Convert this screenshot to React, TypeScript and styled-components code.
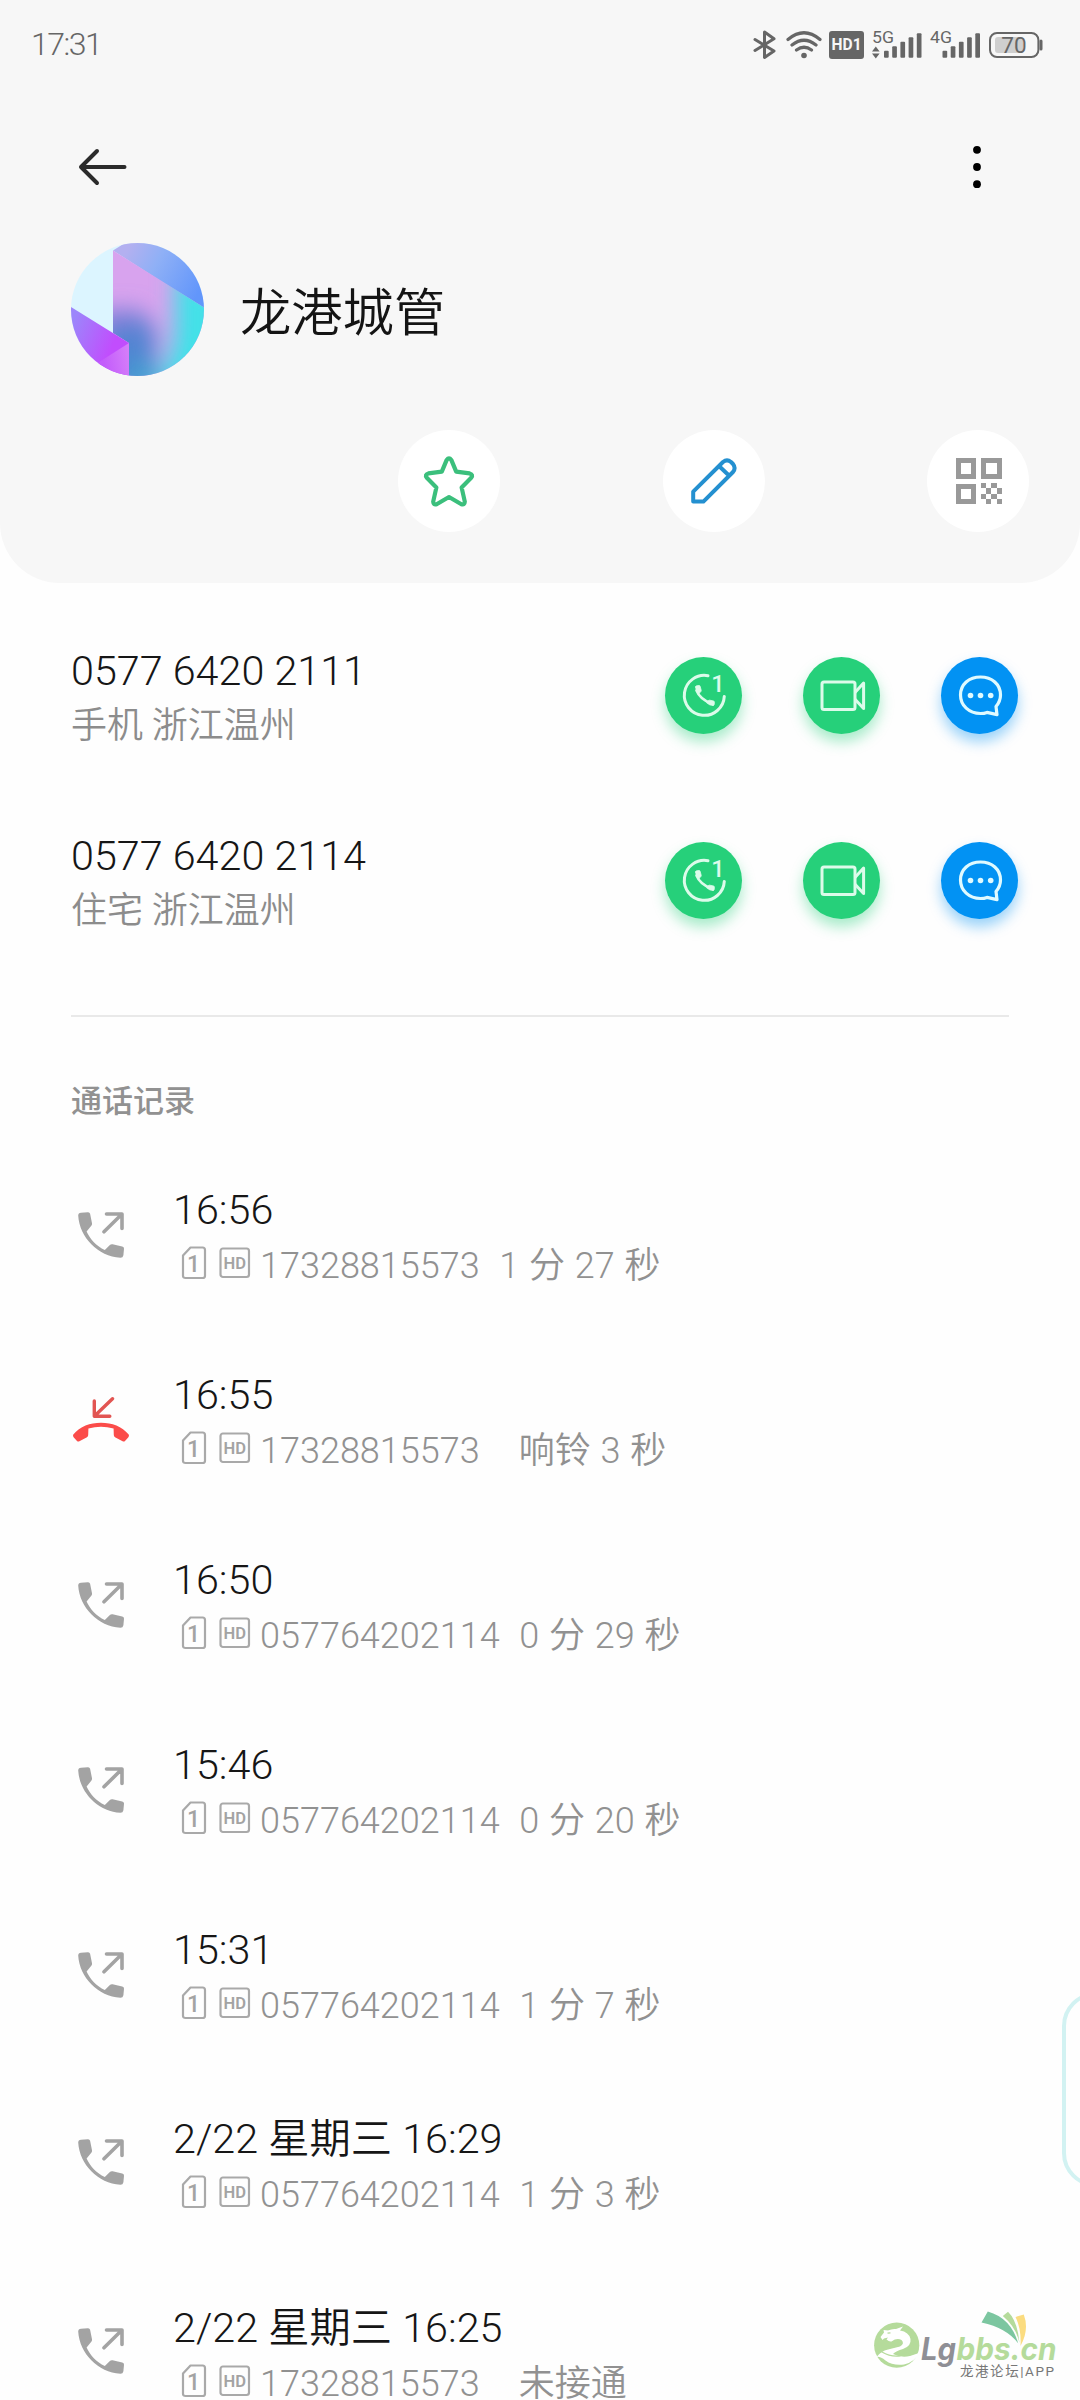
import React from "react";
import styled, { createGlobalStyle } from "styled-components";

const GlobalStyle = createGlobalStyle`
  html, body { margin: 0; background: #fefefe; }
  body {
    width: 1080px;
    height: 2400px;
    overflow: hidden;
    font-family: Roboto, "Noto Sans CJK SC", sans-serif;
    font-weight: 300;
    color: #161616;
  }
  button { font-family: inherit; }
  svg { display: block; flex: none; }
`;

const Screen = styled.div`
  position: relative;
  width: 1080px;
  height: 2400px;
  overflow: hidden;
  background: #fefefe;
`;

const Header = styled.header`
  height: 583px;
  box-sizing: border-box;
  background: #f7f7f7;
  border-radius: 0 0 60px 60px;
`;

const StatusBar = styled.div`
  display: flex;
  justify-content: space-between;
  align-items: center;
  height: 90px;
  padding: 0 35px 0 31px;
`;

const Clock = styled.span`
  margin-top: -2px;
  font-size: 32px;
  letter-spacing: -1.5px;
  font-weight: 350;
  color: #666;
`;

const StatusIcons = styled.div`
  display: flex;
  align-items: center;
`;

const TopBar = styled.div`
  display: flex;
  justify-content: space-between;
  align-items: center;
  height: 153px;
  padding: 0 96px 0 78px;
`;

const Identity = styled.div`
  display: flex;
  align-items: center;
  height: 133px;
  padding-left: 71px;
  gap: 36px;
`;

const ContactName = styled.h1`
  margin: 9px 0 0;
  font-size: 51.3px;
  line-height: 60px;
  font-weight: 350;
  color: #141414;
`;

const QuickActions = styled.div`
  display: flex;
  justify-content: space-between;
  padding: 54px 51px 0 398px;
`;

const QuickButton = styled.button`
  display: flex;
  align-items: center;
  justify-content: center;
  width: 102px;
  height: 102px;
  padding: 0;
  border: 0;
  border-radius: 50%;
  background: #fff;
`;

const NumberList = styled.section`
  margin: 20px 71px 0;
  padding-bottom: 42px;
  border-bottom: 2px solid #e9e9e9;
`;

const NumberRow = styled.div`
  display: flex;
  align-items: center;
  justify-content: space-between;
  height: 185px;
  margin-right: -9px;
`;

const NumberText = styled.div`
  padding-top: 5px;
`;

const NumberValue = styled.div`
  font-size: 41.3px;
  line-height: 54px;
`;

const NumberPlace = styled.div`
  margin-top: 1px;
  font-size: 36px;
  line-height: 54px;
  font-weight: 350;
  color: #8c8c8c;
`;

const NumberActions = styled.div`
  display: flex;
  gap: 61px;
`;

const ActionButton = styled.button<{ $tone: "green" | "blue" }>`
  display: flex;
  align-items: center;
  justify-content: center;
  width: 77px;
  height: 77px;
  padding: 0;
  border: 0;
  border-radius: 50%;
  background: ${(p) => (p.$tone === "green" ? "#26d07a" : "#0292f3")};
  box-shadow: 0 8px 14px
    ${(p) => (p.$tone === "green" ? "rgba(38, 208, 122, 0.4)" : "rgba(2, 146, 243, 0.4)")};
`;

const SectionTitle = styled.h2`
  margin: 62px 0 17px 71px;
  font-size: 31px;
  line-height: 46px;
  font-weight: 500;
  color: #919191;
`;

const LogRow = styled.div<{ $tall: boolean }>`
  display: flex;
  align-items: center;
  height: ${(p) => (p.$tall ? 189 : 185)}px;
  padding-left: 71px;
`;

const LogIcon = styled.div`
  display: flex;
  justify-content: center;
  width: 60px;
  margin-right: 42px;
`;

const LogBody = styled.div<{ $tall: boolean }>`
  align-self: flex-start;
  padding-top: ${(p) => (p.$tall ? 45 : 41)}px;
`;

const LogTime = styled.div`
  font-size: 41.3px;
  line-height: 55px;
`;

const LogMeta = styled.div`
  display: flex;
  align-items: center;
  margin-left: 7.5px;
  color: #919191;
`;

const Badges = styled.div`
  display: flex;
  align-items: center;
  gap: 12px;
  margin-bottom: 5px;
`;

const LogText = styled.span`
  margin: 1px 0 0 9.5px;
  font-size: 36px;
  line-height: 54px;
  word-spacing: 1px;
  white-space: pre;
`;

const Han = styled.span`
  font-weight: 350;
`;

const EdgePanel = styled.div`
  position: absolute;
  left: 1062px;
  top: 1992px;
  width: 60px;
  height: 187px;
  border: 4.5px solid #d2f2f2;
  border-radius: 36px;
`;

const Watermark = styled.div`
  position: absolute;
  left: 860px;
  top: 2300px;
`;

const INK = "#666";

const Bluetooth = () => (
  <svg width="24" height="32" viewBox="0 0 24 32" fill="none" stroke={INK} strokeWidth="3" strokeLinecap="round" strokeLinejoin="round">
    <path d="M2 10.5 21 22 11.500 28.500V3L21 9.800 2 21.500" />
  </svg>
);

const Wifi = () => (
  <svg width="36" height="28" viewBox="0 0 36 28" fill="none" stroke={INK} strokeWidth="3.2" strokeLinecap="round">
    <path d="M2 8.5Q18-5 34 8.5M6 14Q18 4.5 30 14M10.5 19Q18 13.5 25.5 19" />
    <circle cx="18" cy="24.5" r="2.8" fill={INK} stroke="none" />
  </svg>
);

const HdBadge = () => (
  <svg width="35" height="28" viewBox="0 0 35 28">
    <rect width="35" height="28" rx="3" fill={INK} />
    <text x="17.6" y="19.4" textAnchor="middle" textLength="30" lengthAdjust="spacingAndGlyphs" fontSize="16" fontWeight="700" fill="#f7f7f7">HD1</text>
  </svg>
);

const Signal = ({ label, barsX, arrows }: { label: string; barsX: number; arrows?: boolean }) => (
  <svg width={barsX + 38} height="40" viewBox={`0 -6 ${barsX + 38} 40`} fill={INK}>
    <text x="0" y="12.4" fontSize="17" fontWeight="400" textLength="22" lengthAdjust="spacingAndGlyphs">{label}</text>
    {[7, 11.5, 16, 20.5, 24.5].map((h, i) => (
      <rect key={h} x={barsX + i * 8.2} y={26.8 - h} width="4.7" height={h} rx="1" />
    ))}
    {arrows && <path d="M0 20.5 3.8 15.5 7.6 20.5ZM0 22.5 7.6 22.5 3.8 27.5Z" />}
  </svg>
);

const Battery = () => (
  <svg width="56" height="26" viewBox="0 0 56 26">
    <rect x="1" y="1" width="48.4" height="24" rx="7" fill="none" stroke={INK} strokeWidth="2" />
    <rect x="6" y="5" width="28" height="16" rx="3" fill="#cfcfcf" />
    <path d="M52 9V17" stroke={INK} strokeWidth="3" strokeLinecap="round" />
    <text x="25" y="20.800" textAnchor="middle" fontSize="22.5" fontWeight="400" fill={INK}>70</text>
  </svg>
);

const StatusGap = styled.i<{ $w: number }>`
  width: ${(p) => p.$w}px;
`;

const BackArrow = () => (
  <svg width="50" height="38" viewBox="0 0 50 38" fill="none" stroke="#2b2b2b" strokeWidth="4" strokeLinecap="round" strokeLinejoin="round">
    <path d="M46.5 19H3M19 3 3 19 19 35" />
  </svg>
);

const MoreDots = () => (
  <svg width="14" height="44" viewBox="0 0 14 44">
    {[4.8, 22, 39.2].map((y) => (
      <circle key={y} cx="7" cy={y} r="3.9" />
    ))}
  </svg>
);

const Avatar = () => (
  <svg width="133" height="133" viewBox="0 0 133 133">
    <defs>
      <clipPath id="av-round"><circle cx="66.5" cy="66.5" r="66.5" /></clipPath>
      <clipPath id="av-body"><path d="M42 7.5 133 64.5V133H58V100L42 90Z" /></clipPath>
      <linearGradient id="av-top" x1="0" y1="0.2" x2="1" y2="0.6">
        <stop offset="0.1" stopColor="#b3b0f0" />
        <stop offset="0.45" stopColor="#8fb0f6" />
        <stop offset="1" stopColor="#6296fb" />
      </linearGradient>
      <linearGradient id="av-low" x1="0" y1="0" x2="1" y2="0.5">
        <stop offset="0.1" stopColor="#9c86fb" />
        <stop offset="0.8" stopColor="#c14dfd" />
      </linearGradient>
      <linearGradient id="av-tri" x1="0" y1="0.5" x2="1" y2="0.3">
        <stop offset="0.2" stopColor="#c35cfb" />
        <stop offset="1" stopColor="#d57ef9" />
      </linearGradient>
      <filter id="av-soft" x="-50%" y="-50%" width="200%" height="200%"><feGaussianBlur stdDeviation="11" /></filter>
    </defs>
    <g clipPath="url(#av-round)">
      <rect width="133" height="133" fill="#dcf5ff" />
      <path d="M42 7.5 54 0H133V66Z" fill="url(#av-top)" />
      <g clipPath="url(#av-body)">
        <rect width="133" height="133" fill="#d8a3ee" />
        <g filter="url(#av-soft)">
          <path d="M104 24 150 50V150H88L104 95Z" fill="#3fe2e8" />
          <path d="M30 76 72 70 86 92 80 150H30Z" fill="#5184d2" />
          <path d="M25 68 68 66 66 84 25 90Z" fill="#7c7fd8" />
          <path d="M60 118H88V150H50Z" fill="#3f9fd0" />
        </g>
      </g>
      <path d="M0 64 58 100V133H0Z" fill="url(#av-low)" />
      <path d="M58 100 25 121V133H58Z" fill="url(#av-tri)" />
    </g>
  </svg>
);

const StarIcon = () => (
  <svg width="56" height="56" viewBox="0 -1 56 56" fill="none" stroke="#3bbf7c" strokeWidth="4.2" strokeLinejoin="round">
    <path d="M25.7 5.9Q28 2.8 30.3 5.9L35.2 17.6 48.6 19.4Q52.6 20.6 50.2 23.8L40.6 33.4 43.8 47.6Q43.6 51.4 40.4 50.2L28 43 15.6 50.2Q12.4 51.4 12.2 47.6L15.4 33.4 5.8 23.8Q3.4 20.6 7.4 19.4L20.8 17.6Z" />
  </svg>
);

const PencilIcon = () => (
  <svg width="46" height="46" viewBox="0 0 46 46" fill="none" stroke="#2490d0" strokeWidth="4" strokeLinejoin="round">
    <path d="M2.2 33.6 32 4Q36 .8 40 4L42 6Q45.200 10 42 14L12.400 43.600H2.200ZM28.500 8.500 38 17.500" />
  </svg>
);

const QrIcon = () => (
  <svg width="46" height="46" viewBox="-.8 0 46 46" overflow="visible" fill="#999" shapeRendering="crispEdges">
    <path fillRule="evenodd" d="M0 0H20.500V20.500H0ZM5 5V15.500H15.500V5ZM25.500 0H46V20.500H25.500ZM30.500 5V15.500H41V5ZM0 25.500H20.500V46H0ZM5 30.500V41H15.500V30.500Z" />
    <path d="M25 25h5.250v5.250h-5.250zM35.500 25h5.250v5.250h-5.250zM30.250 30.250h5.250v5.250h-5.250zM40.750 30.250H46v5.250h-5.250zM25 35.500h5.250v5.250h-5.250zM35.500 35.500h5.250v5.250h-5.250zM30.250 40.750h5.250V46h-5.250zM40.750 40.750H46V46h-5.250z" />
  </svg>
);

const CallSimIcon = () => (
  <svg width="77" height="77" viewBox="0 0 77 77" fill="none" stroke="#dcfbea" strokeLinecap="round" strokeLinejoin="round">
    <path d="M43 18.700A20 20 0 1 0 59.300 39.400" strokeWidth="3" />
    <path d="M31.500 33.500Q35 42 45.500 46" strokeWidth="2.600" />
    <path d="M30.600 30Q30.600 29 31.600 28.800L34 28.500Q35 28.500 35.200 29.500L36.200 33.300Q36.300 34 35.900 34.500L33.500 37Q30.500 33.500 30.600 30ZM48 48.500Q49 48.500 49.200 47.500L49.400 45.200Q49.400 44.200 48.500 44L44.800 43.200Q44 43 43.500 43.500L41.500 45.700Q44.500 48.500 48 48.500Z" fill="#dcfbea" strokeWidth=".8" />
    <text x="53" y="35" textAnchor="middle" fontSize="23.500" fontWeight="500" fill="#dcfbea" stroke="none">1</text>
  </svg>
);

const VideoIcon = () => (
  <svg width="77" height="77" viewBox="0 0 77 77" fill="none" stroke="#dcfbea" strokeWidth="3" strokeLinejoin="round">
    <rect x="19" y="25" width="33" height="27.500" rx="2" />
    <path d="M52 35.500 60.600 26V51.500L52 42.200" />
  </svg>
);

const MessageIcon = () => (
  <svg width="77" height="77" viewBox="0 0 77 77" fill="none" stroke="#dffaff" strokeWidth="3.200" strokeLinejoin="round">
    <path d="M55 49.500C58 46 59.500 42.500 59.500 38 59.500 27.500 51 20 39.500 20S19.500 27.500 19.500 38 28 56.500 39.500 56.500C42 56.500 44 56.200 46 55.400L56 57.600Z" />
    {[29.500, 39.500, 49.700].map((x) => (
      <circle key={x} cx={x} cy="38.500" r="2.800" fill="#dffaff" stroke="none" />
    ))}
  </svg>
);

const OutgoingIcon = () => (
  <svg width="47" height="46" viewBox="0 0 47 46">
    <path fill="#a3a3a3" d="M3 .8 9.800.2Q11.600 0 12.100 1.800L14 11.200Q14.200 12.700 13.300 13.800L8.600 19.400C12 27 18.500 34 26.800 38L31.600 33.200Q33 32 34.600 32.300L44.200 34.400Q46.200 34.900 46 36.800L45.400 43.300Q45 45.800 42.400 45.800C20 44.500 1.500 25.500.2 3.600Q.2 1 3 .8Z" />
    <path fill="none" stroke="#a3a3a3" strokeWidth="3.600" strokeLinecap="round" strokeLinejoin="round" d="M28.500 2H44V16.500M43.500 2.500 26 19.800" />
  </svg>
);

const MissedIcon = () => (
  <svg width="56" height="46" viewBox="0 0 56 46">
    <path fill="#fb4c4a" d="M.3 37.500C7 29.500 17 25.800 28 25.800S49 29.500 55.700 37.500Q56.400 39 55.200 40.400L52 44Q51 45 49.600 44.300L42 40.200Q40.800 39.500 40.800 38L40.600 31.600Q28 28 15.400 31.600L15.200 38Q15.200 39.500 14 40.200L6.400 44.300Q5 45 4 44L.8 40.400Q-.4 39 .3 37.500Z" />
    <path fill="none" stroke="#e25552" strokeWidth="3.400" strokeLinecap="round" strokeLinejoin="round" d="M21.300 4V19.300H36.800M39.500 1.800 21.800 18.800" />
  </svg>
);

const SimIcon = () => (
  <svg width="26" height="34" viewBox="0 0 26 34">
    <path d="M9.500 1.500H21.500Q24 1.500 24 4V30Q24 32 21.500 32H4.500Q2 32 2 30V9.500Z" fill="none" stroke="#a9a9a9" strokeWidth="2.200" strokeLinejoin="round" />
    <text x="12.600" y="25.800" textAnchor="middle" fontSize="23" fontWeight="500" fill="#a3a3a3">1</text>
  </svg>
);

const HdIcon = () => (
  <svg width="32" height="32" viewBox="0 0 32 32">
    <rect x="1.500" y="1.500" width="28.500" height="28.500" rx="2.500" fill="none" stroke="#a9a9a9" strokeWidth="2.200" />
    <text x="15.700" y="21.500" textAnchor="middle" textLength="22.500" lengthAdjust="spacingAndGlyphs" fontSize="16.500" fontWeight="600" fill="#a3a3a3">HD</text>
  </svg>
);

const ForumLogo = () => (
  <svg width="220" height="90" viewBox="0 0 220 90">
    <circle cx="36.700" cy="45.200" r="22.600" fill="#b5db9b" />
    <path fill="#fff" d="M20.500 37 24 32.500 23.500 30 28 30.500Q32 28.500 36 29L43 26.500 40 30.500Q49 32 50.500 39 51.500 46 43 49 36 51 33 54 41 58 50 56L59 53Q55 62 44 64.500 33 66 25.500 60.500 20 56 16.500 57 21 51 28 49.500L40 46.500Q45 43.500 41.500 40 37 37.500 31.500 41.500 29 42 26.500 39.500L28 37.500 24 38.500 22.500 40Z" />
    <path fill="none" stroke="#b5db9b" strokeWidth="1.200" strokeLinecap="round" d="M22 52Q30 57 40 56M47 53Q51 51 56 51" />
    <path d="M27.500 33.200 30.500 32.800" stroke="#b5db9b" strokeWidth="1.300" />
    <path fill="#7cc6a0" d="M121.500 22.500 127.800 11.500Q151 18 158.200 43.500 147 28 121.500 22.500Z" />
    <path fill="#b5db9b" d="M142.800 16 148 11.800Q157.500 21 159.500 43 156 27 142.800 16Z" />
    <path fill="#fbdc80" d="M155.500 17 163.800 14.500Q169.500 30 160.500 46 161.500 29 155.500 17Z" />
    <g fontFamily="Inter, sans-serif" fontStyle="italic" fontWeight="700">
      <text x="61" y="59.500" fontSize="31" fill="#8f8f95" textLength="35" lengthAdjust="spacingAndGlyphs">Lg</text>
      <text x="96.500" y="59.500" fontSize="31" fill="#b5db9b" textLength="100" lengthAdjust="spacingAndGlyphs">bbs.cn</text>
    </g>
    <text x="100" y="76" fontSize="13.500" fontWeight="400" fill="#777" textLength="94">龙港论坛|APP</text>
  </svg>
);

const numbers = [
  { value: "0577 6420 2111", place: "手机 浙江温州" },
  { value: "0577 6420 2114", place: "住宅 浙江温州" },
];

const calls = [
  { time: "16:56", detail: "17328815573  1 分 27 秒" },
  { time: "16:55", detail: "17328815573    响铃 3 秒", missed: true },
  { time: "16:50", detail: "057764202114  0 分 29 秒" },
  { time: "15:46", detail: "057764202114  0 分 20 秒" },
  { time: "15:31", detail: "057764202114  1 分 7 秒" },
  { time: "2/22 星期三 16:29", detail: "057764202114  1 分 3 秒", dated: true },
  { time: "2/22 星期三 16:25", detail: "17328815573    未接通", dated: true },
];

/* Digits stay light while Han characters are set one step heavier. */
const Mixed = ({ text }: { text: string }) => (
  <>
    {text.split(/([\u4e00-\u9fff]+)/).map((part, i) => (i % 2 ? <Han key={i}>{part}</Han> : part))}
  </>
);

export default function App() {
  return (
    <Screen>
      <GlobalStyle />
      <Header>
        <StatusBar>
          <Clock>17:31</Clock>
          <StatusIcons>
            <Bluetooth />
            <StatusGap $w={9} />
            <Wifi />
            <StatusGap $w={7} />
            <HdBadge />
            <StatusGap $w={8} />
            <Signal label="5G" barsX={12} arrows />
            <StatusGap $w={7.5} />
            <Signal label="4G" barsX={12.5} />
            <StatusGap $w={9} />
            <Battery />
          </StatusIcons>
        </StatusBar>
        <TopBar>
          <BackArrow />
          <MoreDots />
        </TopBar>
        <Identity>
          <Avatar />
          <ContactName>龙港城管</ContactName>
        </Identity>
        <QuickActions>
          <QuickButton><StarIcon /></QuickButton>
          <QuickButton><PencilIcon /></QuickButton>
          <QuickButton><QrIcon /></QuickButton>
        </QuickActions>
      </Header>

      <NumberList>
        {numbers.map((n) => (
          <NumberRow key={n.value}>
            <NumberText>
              <NumberValue>{n.value}</NumberValue>
              <NumberPlace>{n.place}</NumberPlace>
            </NumberText>
            <NumberActions>
              <ActionButton $tone="green"><CallSimIcon /></ActionButton>
              <ActionButton $tone="green"><VideoIcon /></ActionButton>
              <ActionButton $tone="blue"><MessageIcon /></ActionButton>
            </NumberActions>
          </NumberRow>
        ))}
      </NumberList>

      <SectionTitle>通话记录</SectionTitle>
      {calls.map((c) => (
        <LogRow key={c.time} $tall={!!c.dated}>
          <LogIcon>{c.missed ? <MissedIcon /> : <OutgoingIcon />}</LogIcon>
          <LogBody $tall={!!c.dated}>
            <LogTime><Mixed text={c.time} /></LogTime>
            <LogMeta>
              <Badges>
                <SimIcon />
                <HdIcon />
              </Badges>
              <LogText><Mixed text={c.detail} /></LogText>
            </LogMeta>
          </LogBody>
        </LogRow>
      ))}

      <EdgePanel />
      <Watermark><ForumLogo /></Watermark>
    </Screen>
  );
}
